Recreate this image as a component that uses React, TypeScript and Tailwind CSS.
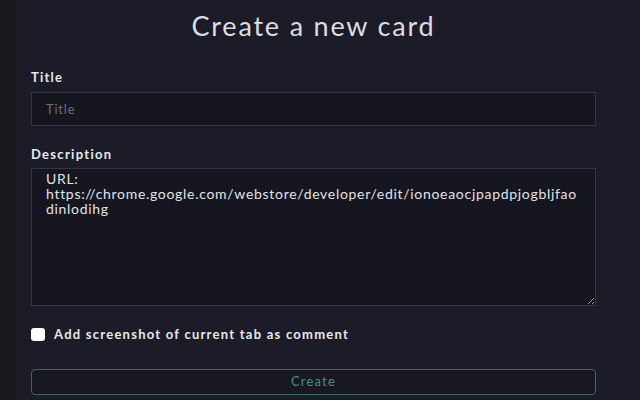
import React from "react";

export default function App() {
  return (
    <div className="flex h-[400px] w-[640px] overflow-hidden bg-[#1b1c27] text-[#e4e4ea]" style={{ fontFamily: "Lato, 'Noto Sans', sans-serif" }}>
      <div className="w-[15px] shrink-0 bg-[#18181d]" />
      <div className="flex w-[597px] shrink-0 flex-col px-4">
        <h1 className="mt-[11px] text-center text-[27px] leading-[30px] font-normal tracking-[1.8px] text-[#dcdce2]">Create a new card</h1>
        <label className="mt-[28px] text-[13px] font-bold leading-4 tracking-[1.2px] text-[#e8e8ee]">Title</label>
        <input
          className="mt-[7px] h-[34px] w-full border border-[#353643] bg-[#15161f] px-[14px] text-[13px] tracking-[0.8px] text-[#d8d8de] placeholder:text-[#6d6e78] outline-none"
          placeholder="Title"
        />
        <label className="mt-[20px] text-[13px] font-bold leading-4 tracking-[1.3px] text-[#e8e8ee]">Description</label>
        <textarea
          className="mt-[6px] h-[138px] w-full resize-y border border-[#353643] bg-[#15161f] px-[14px] pt-[2px] text-[14px] leading-[15px] tracking-[0.7px] text-[#e2e2e8] outline-none"
          defaultValue="URL: https://chrome.google.com/webstore/developer/edit/ionoeaocjpapdpjogbljfaodinlodihg"
        />
        <div className="mt-[19px] flex items-center gap-[9px]">
          <span className="h-[13px] w-[14px] rounded-[3px] bg-white" />
          <span className="text-[13px] font-bold tracking-[1.25px] text-[#e8e8ee]">Add screenshot of current tab as comment</span>
        </div>
        <button className="mt-[24px] h-[26px] w-full rounded-[4px] border border-[#2f6d62] bg-[#171821] text-[13px] tracking-[1.2px] text-[#3f9676]">
          Create
        </button>
      </div>
    </div>
  );
}
